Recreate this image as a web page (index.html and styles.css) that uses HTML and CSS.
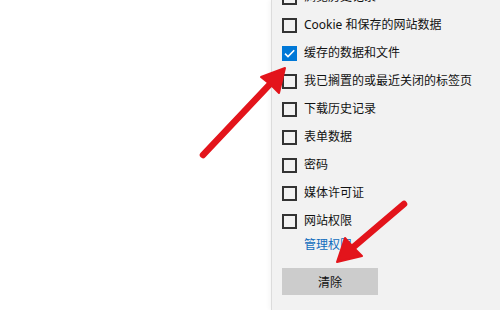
FILE: index.html
```html
<!DOCTYPE html>
<html lang="zh-CN">
<head>
<meta charset="utf-8">
<link rel="stylesheet" href="styles.css">
</head>
<body>
<div class="page">
  <div class="blank"></div>
  <aside class="panel">
    <ul class="options">
      <li class="row"><span class="box"></span><span class="label">浏览历史记录</span></li>
      <li class="row"><span class="box"></span><span class="label">Cookie 和保存的网站数据</span></li>
      <li class="row"><span class="box checked"><svg viewBox="0 0 15 15" width="15" height="15"><polyline points="3,7.6 6,10.6 12.2,4.2" fill="none" stroke="#fff" stroke-width="1.6"/></svg></span><span class="label">缓存的数据和文件</span></li>
      <li class="row"><span class="box"></span><span class="label">我已搁置的或最近关闭的标签页</span></li>
      <li class="row"><span class="box"></span><span class="label">下载历史记录</span></li>
      <li class="row"><span class="box"></span><span class="label">表单数据</span></li>
      <li class="row"><span class="box"></span><span class="label">密码</span></li>
      <li class="row"><span class="box"></span><span class="label">媒体许可证</span></li>
      <li class="row"><span class="box"></span><span class="label">网站权限</span></li>
    </ul>
    <a class="manage" href="#">管理权限</a>
    <button class="clear">清除</button>
  </aside>
  <svg class="arrows" viewBox="0 0 500 310" width="500" height="310">
    <g stroke="#e3141b" stroke-width="6.5" stroke-linecap="round" fill="#e3141b">
      <line x1="203" y1="155" x2="272" y2="82"/>
      <polygon stroke-width="2" stroke-linejoin="round" points="285,68 279,93 271,85 261,77"/>
      <line x1="404" y1="204" x2="350" y2="250"/>
      <polygon stroke-width="2" stroke-linejoin="round" points="337,262 345,238 353,247 362,256"/>
    </g>
  </svg>
</div>
</body>
</html>
```
FILE: styles.css
```css
html, body {
  margin: 0;
  padding: 0;
  background: #ffffff;
}
.page {
  position: relative;
  width: 500px;
  height: 310px;
  overflow: hidden;
  display: flex;
  font-family: "Noto Sans", "Noto Sans CJK SC", sans-serif;
}
.blank {
  width: 271px;
  flex: none;
  background: #ffffff;
}
.panel {
  flex: 1;
  background: #f2f2f2;
  border-left: 1px solid #dcdcdc;
  box-shadow: -2px 0 4px rgba(0,0,0,0.04);
  display: flex;
  flex-direction: column;
  align-items: flex-start;
  padding-left: 10px;
}
.options {
  list-style: none;
  margin: -17px 0 0 0;
  padding: 0;
}
.row {
  height: 28px;
  display: flex;
  align-items: center;
  gap: 7px;
}
.box {
  width: 15px;
  height: 15px;
  box-sizing: border-box;
  border: 2px solid #333333;
  background: transparent;
  display: block;
  flex: none;
}
.box.checked {
  border: none;
  background: #0078d7;
}
.box svg {
  display: block;
}
.label {
  font-size: 12px;
  color: #111111;
  line-height: 16px;
}
.manage {
  margin-left: 22px;
  margin-top: 2px;
  font-size: 12px;
  line-height: 16px;
  color: #0f6cbd;
  text-decoration: none;
}
.clear {
  margin-top: 15px;
  width: 96px;
  height: 27px;
  border: none;
  background: #cccccc;
  font-family: "Noto Sans CJK SC", sans-serif;
  font-size: 12px;
  color: #111111;
  padding: 0;
}
.arrows {
  position: absolute;
  left: 0;
  top: 0;
  pointer-events: none;
}
```
